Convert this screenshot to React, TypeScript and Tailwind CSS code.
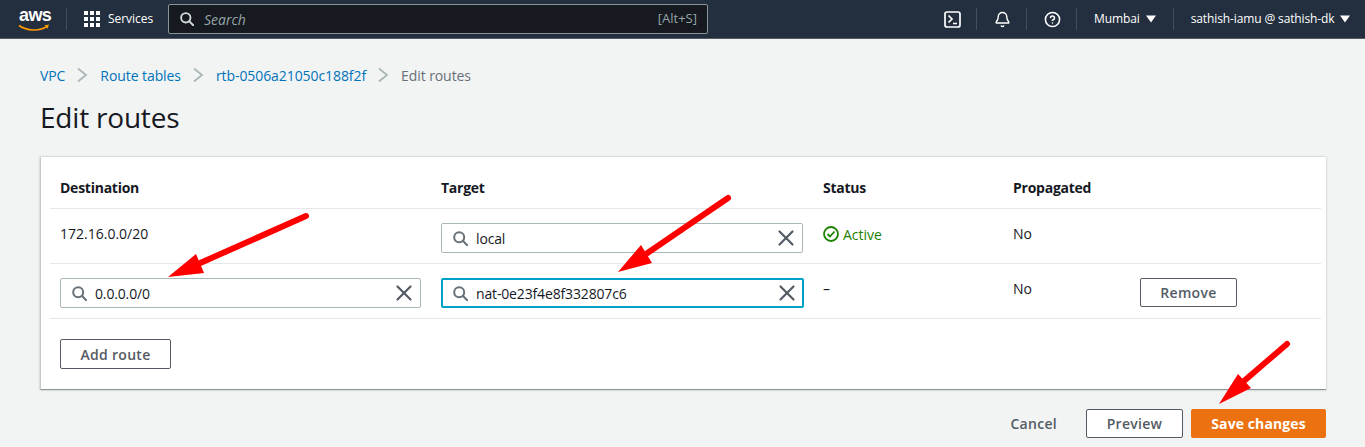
import { Bell, CircleHelp, X } from "lucide-react";

const font = "font-['Open_Sans','Noto_Sans',sans-serif]";

function Caret() {
  return (
    <svg className="h-[8px] w-[10px] text-white" viewBox="0 0 10 8" fill="currentColor">
      <path d="M0 0.5h10L5 7.5z" />
    </svg>
  );
}

function Separator() {
  return <div className="h-[22px] w-px bg-[#414d5c]" />;
}

function Chevron() {
  return (
    <svg className="mx-[12px] h-[16px] w-[11px] text-[#aab7b8]" viewBox="0 0 11 16" fill="none" stroke="currentColor" strokeWidth="1.8">
      <path d="M1 1.5l8 6.5-8 6.5" />
    </svg>
  );
}

function SearchGlyph({ className }: { className: string }) {
  return (
    <svg className={className} viewBox="0 0 15 15" fill="none" stroke="currentColor" strokeWidth="2">
      <circle cx="6.2" cy="6.2" r="5" />
      <path d="M9.8 9.8L14.2 14.2" strokeLinecap="round" />
    </svg>
  );
}

function Header() {
  return (
    <header className="flex h-[39px] items-center border-b border-[#545b64] bg-[#232f3e] text-white">
      <div className="relative ml-[18px] h-[30px] w-[32px]">
        <span className="absolute left-px top-[1px] font-['Liberation_Sans',sans-serif] text-[18px] font-bold leading-[20px] tracking-[-0.6px]">aws</span>
        <svg className="absolute left-0 top-[20px] h-[8px] w-[32px]" viewBox="0 0 32 8" fill="none">
          <path d="M1 1.5c8 5.5 20 6 28 1" stroke="#ff9900" strokeWidth="1.6" />
          <path d="M26.5 1.2l4.5-.6-1.4 4.2z" fill="#ff9900" />
        </svg>
      </div>
      <div className="ml-[16px] h-[22px] w-px bg-[#414d5c]" />
      <svg className="ml-[17px] h-[16px] w-[16px]" viewBox="0 0 16 16" fill="currentColor">
        <path d="M0 0h4v4H0zM6 0h4v4H6zM12 0h4v4h-4zM0 6h4v4H0zM6 6h4v4H6zM12 6h4v4h-4zM0 12h4v4H0zM6 12h4v4H6zM12 12h4v4h-4z" />
      </svg>
      <span className="ml-[8px] w-[44px] whitespace-nowrap text-[12px] tracking-[-0.05px]">Services</span>
      <div className="ml-[16px] flex h-[30px] w-[540px] items-center rounded-[2px] border border-[#879596] bg-[#16191f] pl-[11px] pr-[10px]">
        <SearchGlyph className="h-[14px] w-[14px] text-[#d5dbdb]" />
        <span className="ml-[10px] text-[14px] italic text-[#95a5a6]">Search</span>
        <span className="ml-auto text-[13px] text-[#95a5a6]">[Alt+S]</span>
      </div>
      <svg className="ml-[236px] h-[17px] w-[17px]" viewBox="0 0 17 17" fill="none" stroke="currentColor" strokeWidth="1.7">
        <rect x="1" y="1" width="15" height="15" rx="2" />
        <path d="M4.5 4.5L8 8l-3.5 3.5M9 12.5h4" />
      </svg>
      <div className="ml-[15px]"><Separator /></div>
      <Bell className="ml-[17px] h-[17px] w-[17px]" strokeWidth={2} />
      <div className="ml-[15px]"><Separator /></div>
      <CircleHelp className="ml-[17px] h-[17px] w-[17px]" strokeWidth={2.2} />
      <div className="ml-[15px]"><Separator /></div>
      <span className="ml-[17px] text-[12px] tracking-[-0.1px]">Mumbai</span>
      <div className="ml-[6px]"><Caret /></div>
      <div className="ml-[17px]"><Separator /></div>
      <span className="ml-[17px] whitespace-nowrap text-[12px] tracking-[-0.12px]">sathish-iamu @ sathish-dk</span>
      <div className="ml-[5px]"><Caret /></div>
    </header>
  );
}

function RouteInput({ value, focused }: { value: string; focused?: boolean }) {
  return (
    <div
      className={
        focused
          ? "flex h-[30px] items-center rounded-[2px] border-2 border-[#00a1c9] bg-white pl-[10px] pr-[2px]"
          : "flex h-[30px] items-center rounded-[2px] border border-[#aab7b8] bg-white pl-[11px] pr-[3px]"
      }
    >
      <SearchGlyph className="h-[15px] w-[15px] text-[#687078]" />
      <span className="ml-[8px] text-[14px] tracking-[-0.15px] text-[#16191f]">{value}</span>
      <X className="ml-auto h-[26px] w-[26px] text-[#545b64]" strokeWidth={2} />
    </div>
  );
}

function OutlineButton({ label, className }: { label: string; className: string }) {
  return (
    <button className={`h-[29px] rounded-[2px] border border-[#545b64] bg-white text-[14px] font-semibold tracking-[0.3px] text-[#545b64] ${className}`}>
      {label}
    </button>
  );
}

const rowGrid = "mr-[5px] ml-[9px] grid grid-cols-[381px_382px_190px_127px_1fr] border-b border-[#e5e7e8] pl-[10px]";

function RoutesTable() {
  return (
    <section className="mt-[22px] h-[233px] border-b border-l border-[#c6cbcc] border-b-[#8d9496] bg-white shadow-[0_0_2px_rgba(0,28,36,0.3)]">
      <div className={`${rowGrid} h-[52px] items-center pt-[10px] text-[14px] font-bold tracking-[-0.25px] text-[#16191f]`}>
        <span>Destination</span>
        <span>Target</span>
        <span>Status</span>
        <span>Propagated</span>
      </div>
      <div className={`${rowGrid} h-[55px] pt-[14px] text-[14px] text-[#16191f]`}>
        <span className="leading-[22px]">172.16.0.0/20</span>
        <div className="w-[362px]"><RouteInput value="local" /></div>
        <span className="flex h-[22px] items-center gap-[4px] text-[#1d8102]">
          <svg className="h-[16px] w-[16px]" viewBox="0 0 16 16" fill="none" stroke="currentColor" strokeWidth="1.8">
            <circle cx="8" cy="8" r="7" />
            <path d="M4.5 8l2.5 2.5 4.5-5" />
          </svg>
          Active
        </span>
        <span className="leading-[22px]">No</span>
      </div>
      <div className={`${rowGrid} h-[55px] pt-[14px] text-[14px] text-[#16191f]`}>
        <div className="w-[361px]"><RouteInput value="0.0.0.0/0" /></div>
        <div className="w-[363px]"><RouteInput value="nat-0e23f4e8f332807c6" focused /></div>
        <span className="leading-[22px]">–</span>
        <span className="leading-[22px]">No</span>
        <OutlineButton label="Remove" className="w-[97px]" />
      </div>
      <div className="pl-[19px] pt-[20px]">
        <OutlineButton label="Add route" className="h-[30px] w-[111px]" />
      </div>
    </section>
  );
}

// Red annotation arrows drawn over the finished page
function Arrow({ tail, head }: { tail: string; head: string }) {
  return (
    <g>
      <path d={tail} stroke="#ff0000" strokeWidth="6" strokeLinecap="round" fill="none" />
      <polygon points={head} fill="#ff0000" />
    </g>
  );
}

export default function App() {
  return (
    <div className={`relative h-[447px] w-[1365px] overflow-hidden bg-[#f2f3f3] ${font}`}>
      <Header />
      <main className="pl-[40px] pr-[39px]">
        <nav className="mt-[27px] flex h-[18px] items-center text-[14px] tracking-[-0.08px] text-[#0073bb]">
          <span>VPC</span>
          <Chevron />
          <span>Route tables</span>
          <Chevron />
          <span>rtb-0506a21050c188f2f</span>
          <Chevron />
          <span className="text-[#687078]">Edit routes</span>
        </nav>
        <h1 className="mt-[15px] text-[28px] leading-[36px] tracking-[-0.2px] text-[#16191f]">Edit routes</h1>
        <RoutesTable />
        <div className="mt-[19px] flex items-center justify-end">
          <span className="mr-[29px] text-[14px] font-semibold tracking-[0.3px] text-[#545b64]">Cancel</span>
          <OutlineButton label="Preview" className="w-[97px]" />
          <button className="ml-[8px] h-[29px] w-[135px] rounded-[2px] bg-[#ec7211] text-[14px] font-bold tracking-[0.1px] text-white">
            Save changes
          </button>
        </div>
      </main>
      <svg className="absolute left-0 top-0 h-[447px] w-[1365px]" viewBox="0 0 1365 447">
        <Arrow tail="M306 216L198 264" head="168,277 196,254 204,273" />
        <Arrow tail="M728 198L646 254" head="618,272 641,245 652,263" />
        <Arrow tail="M1287 344L1244 381" head="1219,404 1238,374 1251,388" />
      </svg>
    </div>
  );
}
